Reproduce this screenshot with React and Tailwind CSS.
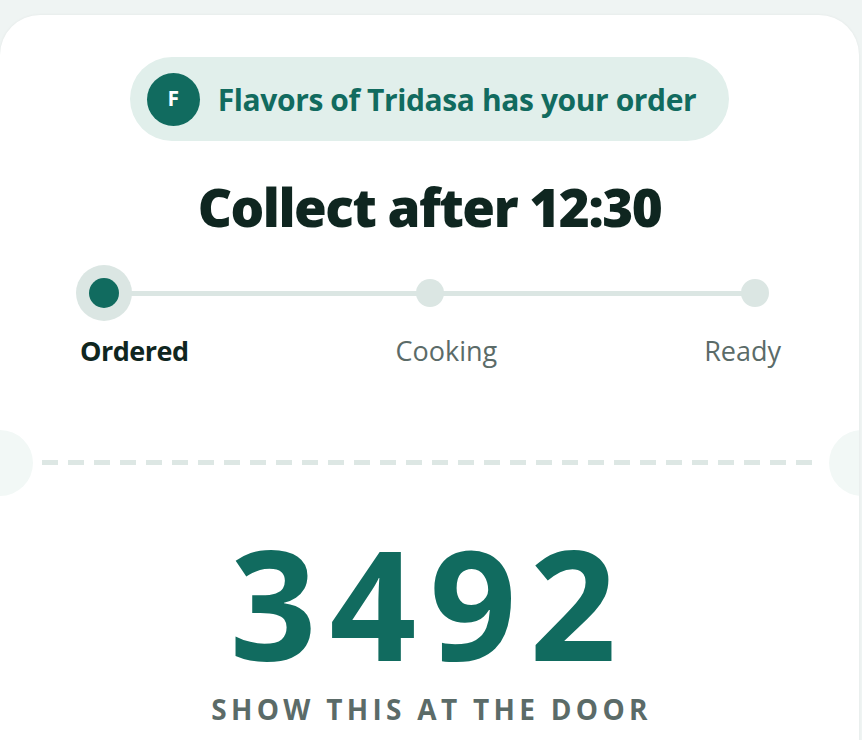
import React from 'react';

const steps = [
  { label: 'Ordered', pos: 'left-0', active: true },
  { label: 'Cooking', pos: 'left-1/2', active: false },
  { label: 'Ready', pos: 'left-full', active: false },
];

// Pickup ticket card
const App = () => {
  return (
    <div className="min-h-screen bg-[#eff4f3] pt-[15px] overflow-hidden" style={{ fontFamily: '"Open Sans", "Noto Sans", sans-serif' }}>
      <div className="relative w-[859px] min-h-[760px] bg-white rounded-t-[40px] shadow-[0_0_3px_rgba(0,0,0,0.06)] overflow-hidden">
        {/* Restaurant pill */}
        <div className="flex justify-center pt-[42px]">
          <div className="flex items-center gap-[18px] h-[84px] pl-[17px] pr-[33px] rounded-full bg-[#e1efeb]">
            <div className="w-[53px] h-[53px] rounded-full bg-[#116b5f] flex items-center justify-center text-white font-bold text-[21px]">
              F
            </div>
            <span className="text-[#116b5f] font-bold text-[30px] tracking-[-0.4px]">Flavors of Tridasa has your order</span>
          </div>
        </div>

        {/* Pickup time */}
        <h1 className="mt-[34px] text-center text-[53px] leading-[64px] font-extrabold text-[#0f2620] tracking-[-1.5px]">Collect after 12:30</h1>

        {/* Progress */}
        <div className="mt-[26px] px-[104px]">
          <div className="relative h-[56px]">
            <div className="absolute left-0 right-0 top-[26px] h-[5px] bg-[#dbe6e3]" />
            {steps.map((s) => (
              <div key={s.label} className={`absolute top-1/2 ${s.pos} -translate-x-1/2 -translate-y-1/2`}>
                {s.active ? (
                  <div className="w-[56px] h-[56px] rounded-full bg-[#dbe6e3] flex items-center justify-center">
                    <div className="w-[30px] h-[30px] rounded-full bg-[#116b5f]" />
                  </div>
                ) : (
                  <div className="w-[28px] h-[28px] rounded-full bg-[#dbe6e3]" />
                )}
              </div>
            ))}
          </div>
        </div>
        <div className="mt-[12px] flex justify-between pl-[80px] pr-[78px] text-[27px] leading-[36px]">
          <span className="font-bold text-[#0f2620] tracking-[-0.5px]">Ordered</span>
          <span className="text-[#5b6b68]">Cooking</span>
          <span className="text-[#5b6b68]">Ready</span>
        </div>

        {/* Tear line */}
        <div className="relative mt-[91px] h-[5px]">
          <div className="mx-[42px] h-[5px] bg-[repeating-linear-gradient(90deg,#dde7e4_0_16px,transparent_16px_26px)]" />
          <div className="absolute -left-[33px] top-1/2 -translate-y-1/2 w-[66px] h-[66px] rounded-full bg-[#f2f8f6]" />
          <div className="absolute -right-[36px] top-1/2 -translate-y-1/2 w-[66px] h-[66px] rounded-full bg-[#f2f8f6]" />
        </div>

        {/* Order code */}
        <div className="mt-[62px] text-center text-[152px] leading-[152px] font-bold text-[#116b5f] tracking-[13px]">3492</div>
        <div className="mt-[14px] text-center text-[28px] leading-[32px] font-bold text-[#5b6b68] tracking-[4.3px] pl-[4px]">SHOW THIS AT THE DOOR</div>
      </div>
    </div>
  );
};

export default App;
